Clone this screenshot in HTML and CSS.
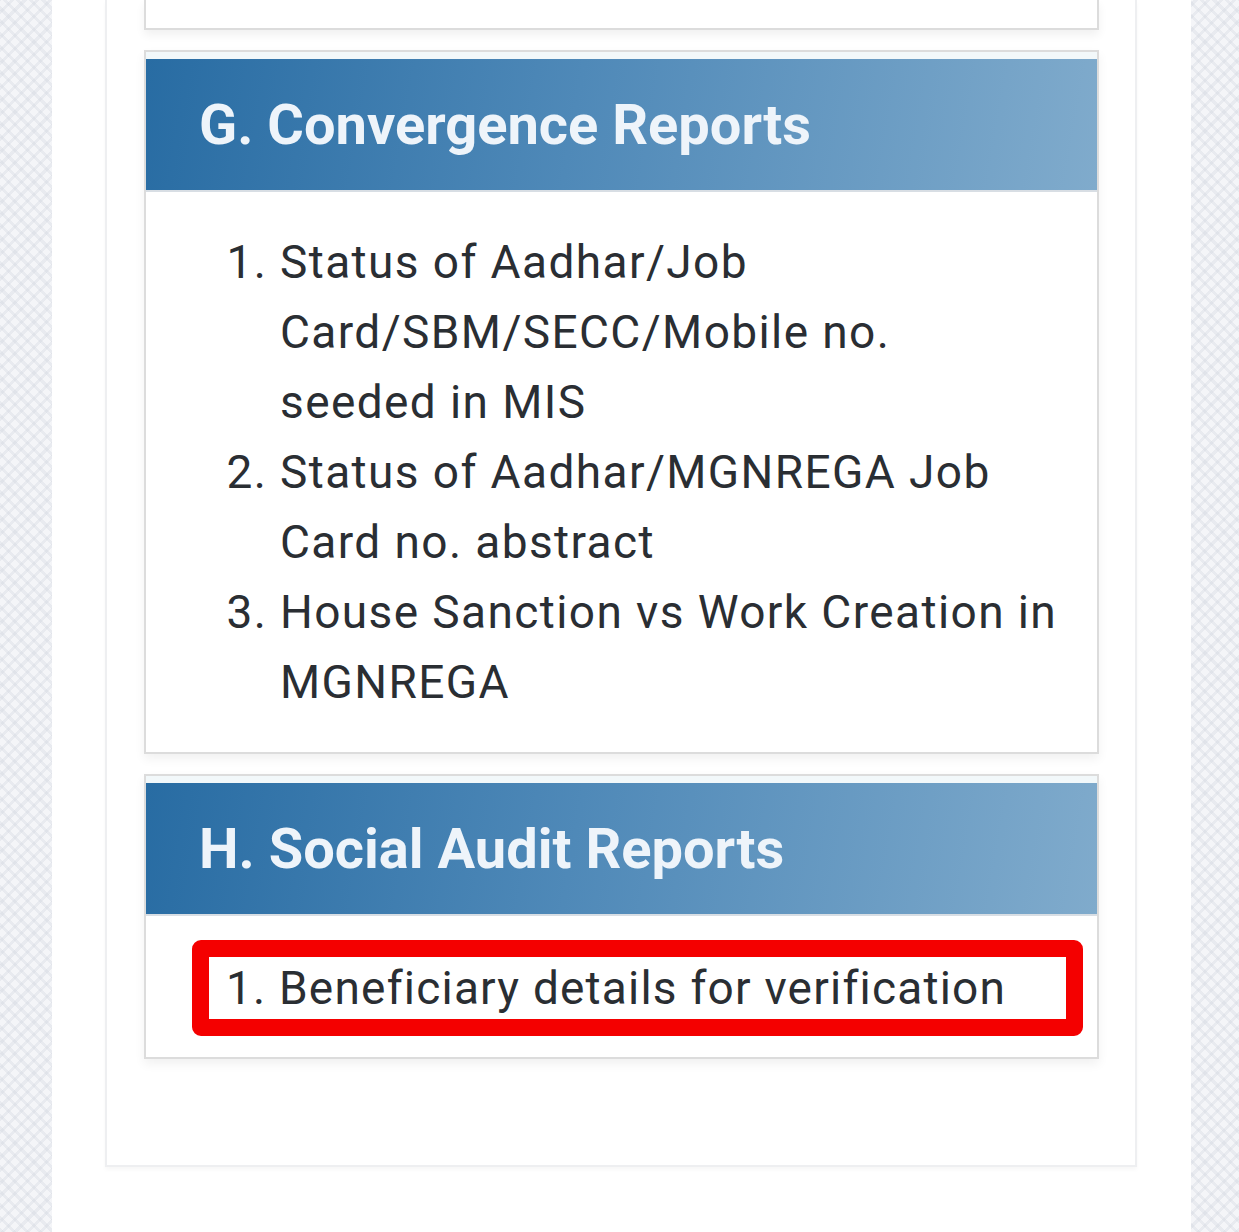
FILE: index.html
```html
<!DOCTYPE html>
<html lang="en">
<head>
  <meta charset="UTF-8">
  <meta name="viewport" content="width=device-width, initial-scale=1.0">
  <title>Reports</title>
  <link rel="stylesheet" href="styles.css">
</head>
<body>
  <div class="page">
    <div class="panel">
      <section class="card card--cut"></section>

      <section class="card">
        <h2 class="card-head">G. Convergence Reports</h2>
        <ol class="report-list report-list--body">
          <li>Status of Aadhar/Job Card/SBM/SECC/Mobile no. seeded in MIS</li>
          <li>Status of Aadhar/MGNREGA Job Card no. abstract</li>
          <li>House Sanction vs Work Creation in MGNREGA</li>
        </ol>
      </section>

      <section class="card">
        <h2 class="card-head">H. Social Audit Reports</h2>
        <div class="card-body">
          <div class="highlight">
            <ol class="report-list">
              <li>Beneficiary details for verification</li>
            </ol>
          </div>
        </div>
      </section>
    </div>
  </div>
</body>
</html>
```

FILE: styles.css
```css
html, body {
  margin: 0;
  padding: 0;
}

body {
  font-family: Roboto, "Liberation Sans", Arial, sans-serif;
  background-color: #f4f5f8;
  background-image:
    repeating-linear-gradient(45deg, rgba(205, 210, 220, 0.3) 0 3px, transparent 3px 9px),
    repeating-linear-gradient(-45deg, rgba(205, 210, 220, 0.3) 0 3px, transparent 3px 9px);
  color: #2a2e33;
}

.page {
  width: 1139px;
  margin-left: 52px;
  min-height: 1232px;
  background: #fff;
}

.panel {
  width: 1032px;
  margin-left: 53px;
  border: 2px solid #eeeff1;
  border-top: 0;
  padding: 0 36px 106px 37px;
  box-sizing: border-box;
  box-shadow: 0 3px 4px rgba(0, 0, 0, 0.03);
}

.card {
  background: #fff;
  border: 2px solid #dcdcdc;
  box-shadow: 0 5px 10px rgba(0, 0, 0, 0.06);
  margin-bottom: 20px;
}

.card:last-child {
  margin-bottom: 0;
}

.card--cut {
  border-top: 0;
  height: 28px;
}

.card-head {
  margin: 0;
  height: 131px;
  display: flex;
  align-items: center;
  padding-left: 53px;
  border-top: 7px solid #f2f8fa;
  border-bottom: 2px solid #d8dee4;
  background: linear-gradient(100deg, #286ca3 0%, #4f89b8 45%, #80abcc 100%);
  color: #eef4fa;
  font-size: 56px;
  font-weight: 700;
}

.report-list {
  margin: 0;
  font-size: 46px;
  line-height: 70px;
  letter-spacing: 1.4px;
  color: #2a2e33;
}

.report-list--body {
  padding: 35px 37px 35px 134px;
}

.card-body {
  padding: 24px 14px 21px 46px;
}

.highlight {
  border: 17px solid #f40000;
  border-radius: 9px;
}

.highlight .report-list {
  padding-left: 70px;
  line-height: 62px;
  letter-spacing: 1.2px;
}
```
